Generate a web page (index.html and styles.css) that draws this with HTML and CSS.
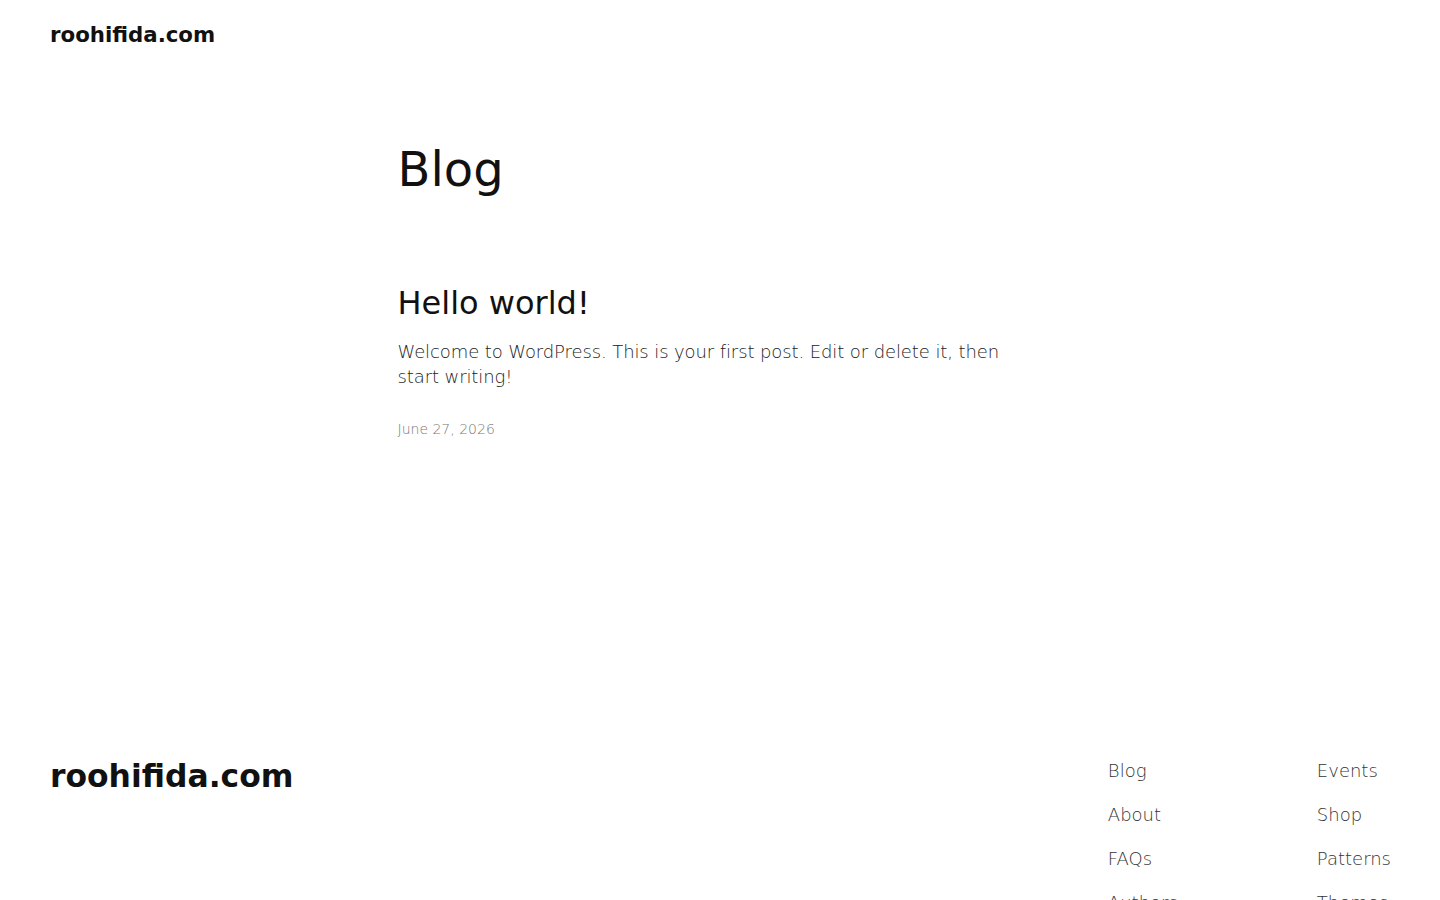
FILE: index.html
```html
<!DOCTYPE html>
<html lang="en">
<head>
<meta charset="utf-8">
<title>Blog – roohifida.com</title>
<link rel="stylesheet" href="styles.css">
</head>
<body>
<header class="site-header">
  <a class="site-title" href="#">roohifida.com</a>
</header>
<main class="site-main">
  <h1 class="page-title">Blog</h1>
  <article class="post">
    <h2 class="post-title"><a href="#">Hello world!</a></h2>
    <p class="post-excerpt">Welcome to WordPress. This is your first post. Edit or delete it, then start writing!</p>
    <div class="post-date">June 27, 2026</div>
  </article>
</main>
<footer class="site-footer">
  <a class="footer-title" href="#">roohifida.com</a>
  <nav class="footer-nav">
    <ul class="nav-col">
      <li><a href="#">Blog</a></li>
      <li><a href="#">About</a></li>
      <li><a href="#">FAQs</a></li>
      <li><a href="#">Authors</a></li>
    </ul>
    <ul class="nav-col">
      <li><a href="#">Events</a></li>
      <li><a href="#">Shop</a></li>
      <li><a href="#">Patterns</a></li>
      <li><a href="#">Themes</a></li>
    </ul>
  </nav>
</footer>
</body>
</html>
```

FILE: styles.css
```css
html, body {
  margin: 0;
  padding: 0;
  background: #ffffff;
}
body {
  font-family: "DejaVu Sans", sans-serif;
  color: #111111;
}
a {
  color: inherit;
  text-decoration: none;
}
.site-header {
  height: 68px;
  padding: 1px 50px 0;
  display: flex;
  align-items: center;
}
.site-title {
  font-size: 21.3px;
  font-weight: 700;
  line-height: 28px;
}
.site-main {
  width: 645px;
  margin: 0 auto;
  min-height: 617px;
}
.page-title {
  margin: 72px 0 0;
  font-size: 48px;
  font-weight: 400;
  line-height: 1.2;
}
.post {
  margin-top: 85px;
}
.post-title {
  margin: 0;
  font-size: 32px;
  font-weight: 400;
  line-height: 1.2;
}
.post-excerpt {
  margin: 17px 0 0;
  font-size: 18px;
  font-weight: 300;
  line-height: 25px;
  letter-spacing: -0.1px;
  color: #222222;
}
.post-date {
  margin-top: 30px;
  font-size: 14px;
  line-height: 20px;
  font-weight: 300;
  color: #777777;
}
.site-footer {
  display: flex;
  justify-content: space-between;
  align-items: flex-start;
  padding: 0 49px 0 50px;
}
.footer-title {
  font-size: 31.4px;
  font-weight: 700;
  line-height: 1.2;
  margin-top: 0;
}
.footer-nav {
  display: flex;
  gap: 0;
}
.nav-col {
  list-style: none;
  margin: 0;
  padding: 0;
  width: 209px;
}
.nav-col:last-child {
  width: auto;
}
.nav-col li {
  font-size: 18px;
  font-weight: 300;
  line-height: 25px;
  color: #333333;
  margin-bottom: 19px;
}
```
